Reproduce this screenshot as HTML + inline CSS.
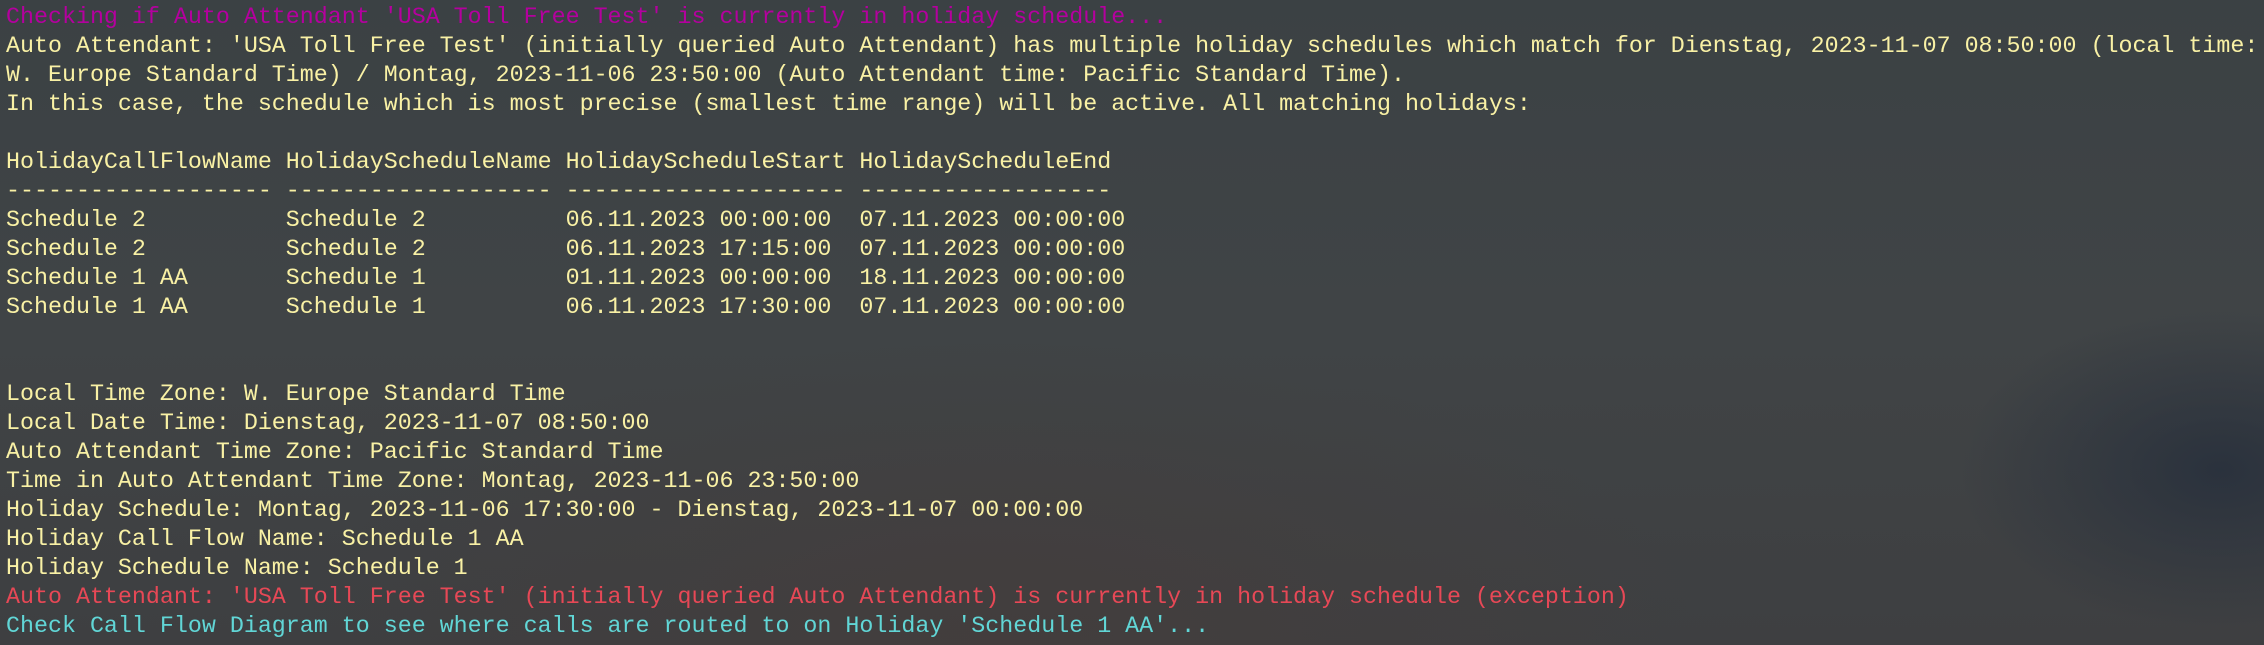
<!DOCTYPE html>
<html><head><meta charset="utf-8"><style>
html,body{margin:0;padding:0;width:2264px;height:645px;overflow:hidden;}
body{background:
radial-gradient(ellipse 260px 160px at 2220px 470px, rgba(40,48,60,0.9), rgba(40,48,60,0) 100%),
radial-gradient(ellipse 700px 300px at 1000px 640px, rgba(70,60,58,0.6), rgba(70,60,58,0) 100%),
linear-gradient(180deg,#3b4144 0%,#404446 50%,#3e3f41 100%);}
pre{margin:0;padding:4px 0 0 6px;font-family:"Liberation Mono",monospace;font-size:23.32px;line-height:29px;color:#f9f1a5;white-space:pre;}
.m{color:#b4009e}.r{color:#e74856}.c{color:#61d6d6}
</style></head><body><pre><span class="m">Checking if Auto Attendant 'USA Toll Free Test' is currently in holiday schedule...</span>
Auto Attendant: 'USA Toll Free Test' (initially queried Auto Attendant) has multiple holiday schedules which match for Dienstag, 2023-11-07 08:50:00 (local time:
W. Europe Standard Time) / Montag, 2023-11-06 23:50:00 (Auto Attendant time: Pacific Standard Time).
In this case, the schedule which is most precise (smallest time range) will be active. All matching holidays:

HolidayCallFlowName HolidayScheduleName HolidayScheduleStart HolidayScheduleEnd
------------------- ------------------- -------------------- ------------------
Schedule 2          Schedule 2          06.11.2023 00:00:00  07.11.2023 00:00:00
Schedule 2          Schedule 2          06.11.2023 17:15:00  07.11.2023 00:00:00
Schedule 1 AA       Schedule 1          01.11.2023 00:00:00  18.11.2023 00:00:00
Schedule 1 AA       Schedule 1          06.11.2023 17:30:00  07.11.2023 00:00:00


Local Time Zone: W. Europe Standard Time
Local Date Time: Dienstag, 2023-11-07 08:50:00
Auto Attendant Time Zone: Pacific Standard Time
Time in Auto Attendant Time Zone: Montag, 2023-11-06 23:50:00
Holiday Schedule: Montag, 2023-11-06 17:30:00 - Dienstag, 2023-11-07 00:00:00
Holiday Call Flow Name: Schedule 1 AA
Holiday Schedule Name: Schedule 1
<span class="r">Auto Attendant: 'USA Toll Free Test' (initially queried Auto Attendant) is currently in holiday schedule (exception)</span>
<span class="c">Check Call Flow Diagram to see where calls are routed to on Holiday 'Schedule 1 AA'...</span></pre></body></html>
